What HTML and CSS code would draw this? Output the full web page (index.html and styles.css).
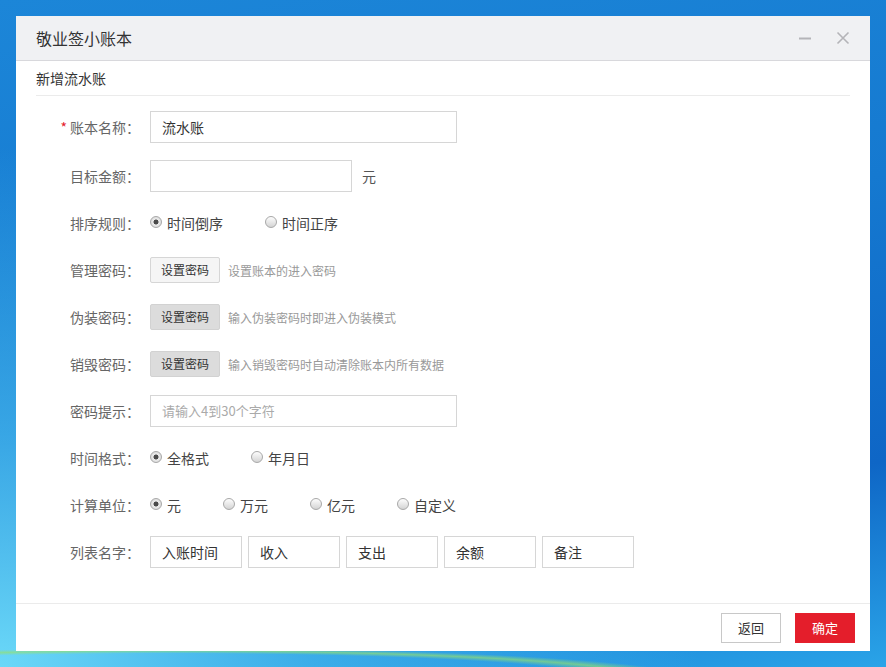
FILE: index.html
```html
<!DOCTYPE html>
<html lang="zh-CN">
<head>
<meta charset="utf-8">
<title>敬业签小账本</title>
<link rel="stylesheet" href="styles.css">
</head>
<body>
<div class="desktop">
  <div class="dialog">
    <div class="header">
      <span class="title">敬业签小账本</span>
      <div class="win-ctrls">
        <svg class="ico" width="14" height="14" viewBox="0 0 14 14"><line x1="1" y1="7.5" x2="13" y2="7.5" stroke="#b4b4b8" stroke-width="2"/></svg>
        <svg class="ico" width="14" height="14" viewBox="0 0 14 14"><path d="M1.5 1.5 L12.5 12.5 M12.5 1.5 L1.5 12.5" stroke="#b4b4b8" stroke-width="1.6" fill="none"/></svg>
      </div>
    </div>
    <div class="subtitle">新增流水账</div>
    <div class="form">
      <div class="row row-first">
        <div class="label"><span class="req">*</span>账本名称<span class="colon">：</span></div>
        <div class="input wide">流水账</div>
      </div>
      <div class="row">
        <div class="label">目标金额<span class="colon">：</span></div>
        <div class="input mid"></div>
        <span class="unit">元</span>
      </div>
      <div class="row">
        <div class="label">排序规则<span class="colon">：</span></div>
        <label class="radio on"><i></i>时间倒序</label>
        <label class="radio"><i></i>时间正序</label>
      </div>
      <div class="row">
        <div class="label">管理密码<span class="colon">：</span></div>
        <span class="btn light">设置密码</span>
        <span class="hint">设置账本的进入密码</span>
      </div>
      <div class="row">
        <div class="label">伪装密码<span class="colon">：</span></div>
        <span class="btn dark">设置密码</span>
        <span class="hint">输入伪装密码时即进入伪装模式</span>
      </div>
      <div class="row">
        <div class="label">销毁密码<span class="colon">：</span></div>
        <span class="btn dark">设置密码</span>
        <span class="hint">输入销毁密码时自动清除账本内所有数据</span>
      </div>
      <div class="row">
        <div class="label">密码提示<span class="colon">：</span></div>
        <div class="input wide placeholder">请输入4到30个字符</div>
      </div>
      <div class="row">
        <div class="label">时间格式<span class="colon">：</span></div>
        <label class="radio on"><i></i>全格式</label>
        <label class="radio"><i></i>年月日</label>
      </div>
      <div class="row">
        <div class="label">计算单位<span class="colon">：</span></div>
        <label class="radio on"><i></i>元</label>
        <label class="radio"><i></i>万元</label>
        <label class="radio"><i></i>亿元</label>
        <label class="radio"><i></i>自定义</label>
      </div>
      <div class="row">
        <div class="label">列表名字<span class="colon">：</span></div>
        <div class="cols">
          <div class="input small">入账时间</div>
          <div class="input small">收入</div>
          <div class="input small">支出</div>
          <div class="input small">余额</div>
          <div class="input small">备注</div>
        </div>
      </div>
    </div>
    <div class="footer">
      <span class="fbtn back">返回</span>
      <span class="fbtn ok">确定</span>
    </div>
  </div>
</div>
</body>
</html>
```
FILE: styles.css
```css
html, body {
  margin: 0;
  padding: 0;
}
body {
  width: 886px;
  height: 667px;
  overflow: hidden;
  font-family: "Noto Sans CJK SC", "Noto Sans", sans-serif;
}
.desktop {
  width: 886px;
  height: 667px;
  box-sizing: border-box;
  padding: 16px;
  background:
    radial-gradient(ellipse 560px 34px at 170px 680px, rgba(150, 225, 110, 0) 78%, rgba(150, 225, 110, 0.65) 86%, rgba(150, 225, 110, 0) 94%),
    radial-gradient(ellipse 700px 520px at 0 667px, #6ad8f8 0, rgba(80, 200, 245, 0.6) 45%, rgba(40, 160, 235, 0) 100%),
    linear-gradient(170deg, #1c86d8 0%, #1579d0 40%, #0e66c6 75%, #2aa4e8 100%);
}
.dialog {
  width: 854px;
  height: 635px;
  background: #fff;
  display: flex;
  flex-direction: column;
}
.header {
  height: 44px;
  background: #f0f1f3;
  border-bottom: 1px solid #d8d8dc;
  display: flex;
  align-items: center;
  justify-content: space-between;
  padding: 0 20px;
}
.title {
  font-size: 16px;
  color: #333;
  line-height: 20px;
}
.win-ctrls {
  display: flex;
  gap: 24px;
  align-items: center;
}
.ico {
  display: block;
}
.subtitle {
  margin: 0 20px;
  height: 34px;
  border-bottom: 1px solid #ebebeb;
  font-size: 14px;
  color: #333;
  line-height: 34px;
}
.form {
  padding: 15px 20px 0;
}
.row {
  height: 32px;
  margin-bottom: 15px;
  display: flex;
  align-items: center;
}
.row-first {
  margin-bottom: 17px;
}
.label {
  width: 104px;
  margin-right: 10px;
  text-align: right;
  font-size: 14px;
  color: #666;
  line-height: 20px;
  flex: none;
}
.colon {
  font-family: "Noto Sans CJK TC", "Noto Sans CJK SC", sans-serif;
}
.req {
  color: #e4202c;
  margin-right: 3px;
}
.input {
  height: 32px;
  box-sizing: border-box;
  border: 1px solid #d6d6d6;
  padding: 0 11px;
  font-size: 14px;
  color: #333;
  line-height: 30px;
  flex: none;
}
.wide { width: 307px; }
.mid { width: 202px; }
.small { width: 92px; }
.placeholder {
  color: #aaa;
  font-size: 13px;
}
.unit {
  margin-left: 10px;
  font-size: 14px;
  color: #555;
}
.cols {
  display: flex;
  gap: 6px;
}
.radio {
  display: flex;
  align-items: center;
  font-size: 14px;
  color: #444;
  line-height: 20px;
  margin-right: 42px;
}
.radio i {
  width: 10px;
  height: 10px;
  border-radius: 50%;
  border: 1px solid #a8a8a8;
  background: linear-gradient(#fdfdfd, #d4d4d4);
  margin-right: 5px;
  position: relative;
  top: -1px;
}
.radio.on i {
  background: radial-gradient(circle, #4a4a4a 0, #4a4a4a 2.2px, #ececec 2.8px, #d0d0d0 100%);
}
.btn {
  height: 26px;
  width: 70px;
  box-sizing: border-box;
  border: 1px solid #d6d6d6;
  border-radius: 2px;
  font-size: 12px;
  color: #333;
  line-height: 24px;
  text-align: center;
  flex: none;
}
.btn.light {
  background: #f5f5f5;
}
.btn.dark {
  background: #dcdcdc;
  border-color: #d2d2d2;
}
.hint {
  margin-left: 8px;
  font-size: 12px;
  color: #999;
}
.footer {
  margin-top: auto;
  height: 48px;
  border-top: 1px solid #ebebeb;
  display: flex;
  justify-content: flex-end;
  align-items: flex-start;
  gap: 14px;
  padding: 9px 15px 0 0;
  box-sizing: border-box;
}
.fbtn {
  width: 60px;
  height: 30px;
  box-sizing: border-box;
  font-size: 13px;
  line-height: 28px;
  text-align: center;
}
.back {
  border: 1px solid #c8c8c8;
  color: #333;
  background: #fff;
}
.ok {
  border: 1px solid #e4202c;
  background: #e41e2b;
  color: #fff;
}
```
